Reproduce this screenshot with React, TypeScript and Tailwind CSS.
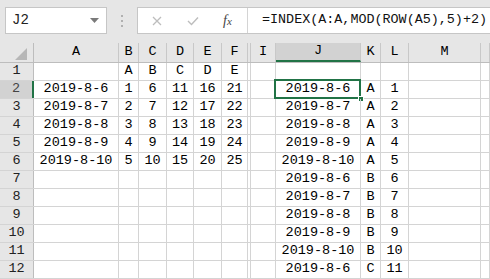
import React from "react";

const cols = ["", "A", "B", "C", "D", "E", "F", "", "I", "J", "K", "L", "M", ""];
const widths = ["w-[34px]", "w-[85px]", "w-[20px]", "w-[28px]", "w-[27px]", "w-[28px]", "w-[26px]", "w-[3px]", "w-[25px]", "w-[85px]", "w-[20px]", "w-[28px]", "w-[72px]", "flex-1"];

const dates = ["2019-8-6", "2019-8-7", "2019-8-8", "2019-8-9", "2019-8-10"];

function cellValue(r: number, c: number): string {
  // r: 1..12, c: column index in cols
  if (c === 1) return r >= 2 && r <= 6 ? dates[r - 2] : "";
  if (c >= 2 && c <= 6) {
    if (r === 1) return "ABCDE"[c - 2];
    if (r >= 2 && r <= 6) return String((c - 2) * 5 + (r - 1));
    return "";
  }
  if (c === 9) return r >= 2 ? dates[(r - 2) % 5] : "";
  if (c === 10) return r >= 2 ? "ABC"[Math.floor((r - 2) / 5)] : "";
  if (c === 11) return r >= 2 ? String(r - 1) : "";
  return "";
}

export default function App() {
  const rows = Array.from({ length: 12 }, (_, i) => i + 1);
  return (
    <div className="w-[490px] h-[279px] overflow-hidden bg-white text-black" style={{ fontFamily: '"Liberation Mono", monospace' }}>
      {/* formula bar */}
      <div className="h-[43px] bg-[#e6e6e6] flex items-start pt-[7px] pl-[5px]">
        <div className="w-[102px] h-[27px] bg-white border border-[#c6c6c6] flex items-center pl-[6px] pr-[7px]">
          <span className="text-[14px] text-[#222] flex-1">J2</span>
          <svg width="9" height="5" viewBox="0 0 9 5"><path d="M0 0 H9 L4.5 5 Z" fill="#7a7a7a" /></svg>
        </div>
        <div className="w-[30px] h-[27px] flex flex-col items-center justify-center gap-[3px]">
          <div className="w-[2px] h-[2px] bg-[#b0b0b0]" />
          <div className="w-[2px] h-[2px] bg-[#b0b0b0]" />
          <div className="w-[2px] h-[2px] bg-[#b0b0b0]" />
        </div>
        <div className="flex-1 h-[27px] bg-white border border-[#c6c6c6] border-r-0 flex items-center">
          <div className="w-[110px] h-full flex items-center border-r border-[#d4d4d4]">
            <svg className="ml-[14px]" width="10" height="10" viewBox="0 0 10 10"><path d="M1 1 L9 9 M9 1 L1 9" stroke="#bdbdbd" strokeWidth="1.3" /></svg>
            <svg className="ml-[25px]" width="12" height="10" viewBox="0 0 12 10"><path d="M1 5 L4.5 8.5 L11 1.5" stroke="#bdbdbd" strokeWidth="1.4" fill="none" /></svg>
            <span className="ml-[24px] text-[14px] italic text-[#444]" style={{ fontFamily: '"Liberation Serif", serif' }}>f<span className="text-[11px]">x</span></span>
          </div>
          <span className="ml-[14px] text-[13.4px] text-[#111] whitespace-nowrap">=INDEX(A:A,MOD(ROW(A5),5)+2)</span>
        </div>
      </div>
      {/* column headers */}
      <div className="flex h-[20px] bg-[#e6e6e6] border-b border-[#bdbdbd]">
        {cols.map((c, i) => (
          <div
            key={i}
            className={`${widths[i]} h-full shrink-0 flex items-center justify-center text-[13.5px] border-r ${i === 0 ? "border-[#bdbdbd]" : "border-[#c8c8c8]"} ${i === 9 ? "bg-[#d2d2d2] border-b-2 border-b-[#217346]" : ""}`}
          >
            {i === 0 ? (
              <svg width="12" height="12" viewBox="0 0 12 12" className="ml-[8px] mt-[2px]"><path d="M12 0 L12 12 L0 12 Z" fill="#b7b7b7" /></svg>
            ) : (
              c
            )}
          </div>
        ))}
      </div>
      {rows.map((r) => (
        <div key={r} className="flex h-[18px] border-b border-[#d4d4d4]">
          {cols.map((_, c) => {
            const v = cellValue(r, c);
            if (c === 0) {
              return (
                <div
                  key={c}
                  className={`${widths[c]} shrink-0 h-full flex items-center justify-center text-[13.5px] ${r === 2 ? "bg-[#d2d2d2] text-[#444] border-r-2 border-r-[#217346]" : "bg-[#e6e6e6] text-[#222] border-r border-[#bdbdbd]"}`}
                >
                  {r}
                </div>
              );
            }
            return (
              <div key={c} className={`${widths[c]} shrink-0 h-full relative flex items-center justify-center text-[13.5px] border-r border-[#d4d4d4] whitespace-nowrap`}>
                {v}
                {r === 2 && c === 9 && (
                  <>
                    <div className="absolute left-[-2px] top-[-2px] right-[-1px] bottom-[-1px] border-2 border-[#217346]" />
                    <div className="absolute right-[-4px] bottom-[-4px] w-[6px] h-[6px] bg-[#217346] border border-white" />
                  </>
                )}
              </div>
            );
          })}
        </div>
      ))}
    </div>
  );
}
